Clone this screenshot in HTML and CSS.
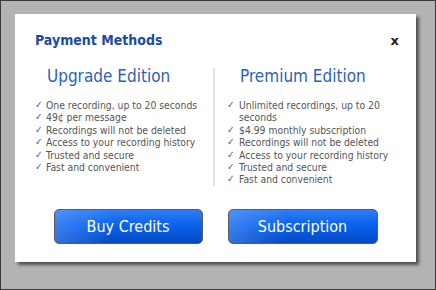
FILE: index.html
```html
<!DOCTYPE html>
<html lang="en">
<head>
    <meta charset="UTF-8">
    <title>Payment Methods</title>
    <link rel="stylesheet" href="styles.css">
</head>
<body>
    <div class="backdrop">
        <div class="modal">
            <div class="modal-header">
                <h1>Payment Methods</h1>
                <span class="close">x</span>
            </div>

            <div class="plans">
                <div class="plan plan-upgrade">
                    <h2>Upgrade Edition</h2>
                    <ul>
                        <li><span class="check">✓</span><span>One recording, up to 20 seconds</span></li>
                        <li><span class="check">✓</span><span>49¢ per message</span></li>
                        <li><span class="check">✓</span><span>Recordings will not be deleted</span></li>
                        <li><span class="check">✓</span><span>Access to your recording history</span></li>
                        <li><span class="check">✓</span><span>Trusted and secure</span></li>
                        <li><span class="check">✓</span><span>Fast and convenient</span></li>
                    </ul>
                </div>
                <div class="plan plan-premium">
                    <h2>Premium Edition</h2>
                    <ul>
                        <li><span class="check">✓</span><span>Unlimited recordings, up to 20 seconds</span></li>
                        <li><span class="check">✓</span><span>$4.99 monthly subscription</span></li>
                        <li><span class="check">✓</span><span>Recordings will not be deleted</span></li>
                        <li><span class="check">✓</span><span>Access to your recording history</span></li>
                        <li><span class="check">✓</span><span>Trusted and secure</span></li>
                        <li><span class="check">✓</span><span>Fast and convenient</span></li>
                    </ul>
                </div>
            </div>

            <div class="actions">
                <button class="btn btn-credits">Buy Credits</button>
                <button class="btn btn-subscription">Subscription</button>
            </div>
        </div>
    </div>
</body>
</html>
```

FILE: styles.css
```css
body {
    margin: 0;
    font-family: "DejaVu Sans Condensed", "DejaVu Sans", sans-serif;
}

.backdrop {
    box-sizing: border-box;
    width: 436px;
    height: 290px;
    border: 1px solid #3a3a3a;
    background-color: #b3b3b3;
    padding: 13px 0 0 14px;
}

.modal {
    box-sizing: border-box;
    width: 401px;
    height: 248px;
    background-color: #fff;
    box-shadow: 3px 3px 3px rgba(0, 0, 0, 0.55);
    padding: 18px 20px 0;
}

.modal-header {
    display: flex;
    justify-content: space-between;
    align-items: baseline;
}

h1 {
    margin: 0;
    font-size: 14px;
    line-height: 17px;
    font-weight: bold;
    color: #1b4c9e;
}

.close {
    margin-right: -3px;
    font-family: "DejaVu Sans", sans-serif;
    font-size: 13px;
    font-weight: bold;
    color: #222;
}

.plans {
    display: grid;
    grid-template-columns: 180px 1fr;
    margin-top: 19px;
}

.plan-upgrade {
    border-right: 2px solid #e2e2e2;
}

h2 {
    margin: 0;
    font-size: 17px;
    line-height: 16px;
    font-weight: normal;
    color: #2b62b6;
}

.plan-upgrade h2 {
    padding-left: 12px;
}

.plan-premium h2 {
    padding-left: 25px;
}

ul {
    list-style: none;
    margin: 15px 0 0;
    padding: 0;
    font-size: 10.3px;
    line-height: 12.4px;
    color: #555;
}

.plan-premium ul {
    padding-left: 12px;
}

li {
    display: flex;
}

.check {
    flex: none;
    width: 11px;
    color: #3565b8;
    font-size: 10px;
}

.plan-premium .check {
    width: 12px;
}

.actions {
    display: flex;
    justify-content: center;
    gap: 25px;
    margin-top: 23px;
}

.btn {
    box-sizing: border-box;
    width: 149px;
    height: 35px;
    border: 1px solid #5b5b5b;
    border-radius: 5px;
    font-family: "DejaVu Sans Condensed", "DejaVu Sans", sans-serif;
    font-size: 16px;
    color: #fff;
    cursor: pointer;
    background:
        linear-gradient(100deg, rgba(120, 170, 255, 0.45) 0%, rgba(120, 170, 255, 0) 40%),
        linear-gradient(to bottom, #2f7df2 0%, #0a63ec 45%, #0449c4 100%);
}

.btn-subscription {
    width: 150px;
}
```
